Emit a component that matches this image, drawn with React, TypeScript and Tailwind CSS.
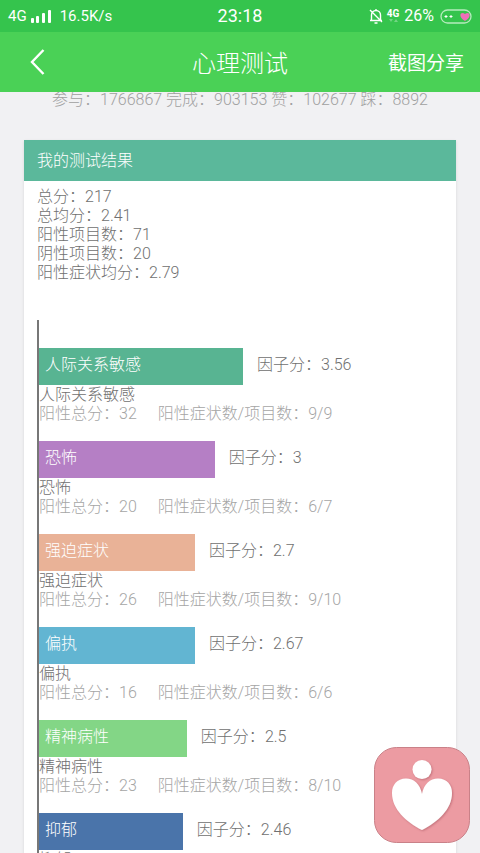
type Factor = {
    name: string
    score: string
    total: number
    ratio: string
    percent: number
    color: string
}

const summary = [
    "总分：217",
    "总均分：2.41",
    "阳性项目数：71",
    "阴性项目数：20",
    "阳性症状均分：2.79",
]

const factors: Factor[] = [
    { name: "人际关系敏感", score: "3.56", total: 32, ratio: "9/9", percent: 50.5, color: "bg-[#58b492]" },
    { name: "恐怖", score: "3", total: 20, ratio: "6/7", percent: 43.5, color: "bg-[#b57fc5]" },
    { name: "强迫症状", score: "2.7", total: 26, ratio: "9/10", percent: 38.6, color: "bg-[#e9b297]" },
    { name: "偏执", score: "2.67", total: 16, ratio: "6/6", percent: 38.6, color: "bg-[#62b5d2]" },
    { name: "精神病性", score: "2.5", total: 23, ratio: "8/10", percent: 36.6, color: "bg-[#83d686]" },
    { name: "抑郁", score: "2.46", total: 32, ratio: "11/13", percent: 35.6, color: "bg-[#4a74aa]" },
]

const StatusBar = () => (
    <div className="grid h-8 grid-cols-[1fr_auto_1fr] items-center bg-[#35c44d] px-2 text-white">
        <div className="flex items-center gap-1 pt-px">
            <span className="text-[15px]">4G</span>
            <svg width="21" height="15" viewBox="0 0 21 15" fill="currentColor" aria-hidden="true">
                <rect x="0" y="9" width="3" height="5" rx="1" />
                <rect x="5" y="7" width="3" height="7" rx="1" />
                <rect x="11" y="4" width="3" height="10" rx="1" />
                <rect x="17" y="1" width="3" height="13" rx="1" />
            </svg>
            <span className="pl-1 text-[15px]">16.5K/s</span>
        </div>
        <span className="text-lg">23:18</span>
        <div className="flex items-center justify-end gap-1">
            <svg width="14" height="16" viewBox="0 0 14 16" fill="none" stroke="currentColor" strokeWidth="1.4" aria-hidden="true">
                <path d="M2.500 12V7a4.500 4.500 0 0 1 9 0v5M1 12.500h12M5.500 15h3M7 1v1.500M1 2l12 12" />
            </svg>
            <span className="flex flex-col items-center">
                <span className="text-[10px] leading-[10px] font-bold">4G</span>
                <svg width="9" height="4" viewBox="0 0 9 4" fill="currentColor" opacity="0.3" aria-hidden="true">
                    <path d="M0 0h4L2 3zM5 3h4L7 0z" />
                </svg>
            </span>
            <span className="pl-px text-base">26%</span>
            <svg className="ml-[2px]" width="32" height="15" viewBox="0 0 32 15" fill="none" aria-hidden="true">
                <rect x="1" y="1" width="30" height="13" rx="6.5" stroke="#b5ebbd" strokeWidth="1.3" />
                <path d="M6 6v3M4.500 7.500h3M11 6v3M9.500 7.500h3" stroke="white" strokeWidth="1" />
                <path d="M25 12C17 7 21 2 25 5C29 2 33 7 25 12Z" fill="#ee6fb8" />
            </svg>
        </div>
    </div>
)

const TitleBar = () => (
    <div className="grid h-[60px] grid-cols-[1fr_auto_1fr] items-center bg-[#4ad156] px-4 text-white">
        <button type="button" aria-label="返回" className="w-10 pl-[14px]">
            <svg width="15" height="28" viewBox="0 0 15 28" fill="none" stroke="currentColor" strokeWidth="2.400">
                <path d="M13.500 2L2 14l11.500 12" />
            </svg>
        </button>
        <h1 className="pt-1 text-2xl font-light">心理测试</h1>
        <button type="button" className="justify-self-end pt-1 text-[19px]">截图分享</button>
    </div>
)

const FactorRow = ({ factor }: { factor: Factor }) => (
    <li className="pb-[18px] leading-[19px]">
        <div className="flex items-center gap-[14px]">
            <div className={`flex h-[37px] items-center pb-1 pl-[6px] text-white ${factor.color}`} style={{ width: `${factor.percent}%` }}>
                {factor.name}
            </div>
            <span className="pb-1">因子分：{factor.score}</span>
        </div>
        <p>{factor.name}</p>
        <p className="flex gap-[21px] text-[#a5a5a5]">
            <span>阳性总分：{factor.total}</span>
            <span>阳性症状数/项目数：{factor.ratio}</span>
        </p>
    </li>
)

const App = () => {
    return (
        <div className="flex h-screen flex-col bg-[#f1f1f3] font-[Roboto,'Noto_Sans_CJK_SC',sans-serif]">
            <header className="z-10 shrink-0">
                <StatusBar />
                <TitleBar />
            </header>

            <main className="min-h-0 flex-1 overflow-y-auto font-light text-[#707070] [scrollbar-width:none]">
                <p className="-mt-1 text-center text-base text-[#a0a0a0]">
                    参与：1766867 完成：903153 赞：102677 踩：8892
                </p>

                <section className="mx-6 mt-7 bg-white shadow-sm">
                    <h2 className="flex h-[41px] items-center bg-[#5bb89b] px-[13px] text-white">我的测试结果</h2>
                    <div className="px-[13px] pt-[6px]">
                        <ul className="leading-[19px]">
                            {summary.map((line) => (
                                <li key={line}>{line}</li>
                            ))}
                        </ul>
                        <ul className="mt-[38px] border-l-2 border-[#777777] pt-7">
                            {factors.map((factor) => (
                                <FactorRow key={factor.name} factor={factor} />
                            ))}
                        </ul>
                    </div>
                </section>
            </main>

            {/* Floating shortcut over the result card */}
            <button type="button" aria-label="心理测试" className="fixed right-[10px] bottom-[10px] z-20">
                <svg width="96" height="96" viewBox="0 0 96 96" aria-hidden="true">
                    <defs>
                        <filter id="soft" x="-20%" y="-20%" width="140%" height="140%">
                            <feDropShadow dx="1" dy="1" stdDeviation="1" floodColor="#a85560" floodOpacity="0.6" />
                        </filter>
                    </defs>
                    <rect x="0.500" y="0.500" width="95" height="95" rx="22" fill="#ec9ba2" stroke="#c98188" />
                    <g fill="white" filter="url(#soft)">
                        <circle cx="48" cy="22.500" r="9.500" />
                        <path d="M48 47C46 37 40 31.500 32 31.500C23 31.500 18 38 18 46C18 62 32 75 48 83C64 75 78 62 78 46C78 38 73 31.500 64 31.500C56 31.500 50 37 48 47Z" />
                    </g>
                </svg>
            </button>
        </div>
    )
}

export default App
